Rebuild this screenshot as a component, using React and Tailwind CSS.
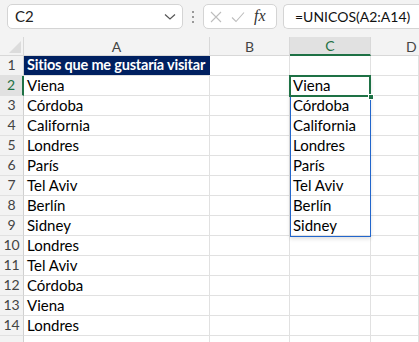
import React from 'react';

const cities = ['Viena', 'Córdoba', 'California', 'Londres', 'París', 'Tel Aviv', 'Berlín', 'Sidney', 'Londres', 'Tel Aviv', 'Córdoba', 'Viena', 'Londres'];
const unique = ['Viena', 'Córdoba', 'California', 'Londres', 'París', 'Tel Aviv', 'Berlín', 'Sidney'];

const cell = 'border-r border-b border-[#e1e1e1] h-[20px] px-[3px] flex items-end pb-[1px] text-[15px] leading-[18px] text-black whitespace-nowrap overflow-visible';

const App = () => {
  const rows = Array.from({ length: 15 }, (_, i) => i + 1);
  return (
    <div className="w-[419px] h-[342px] overflow-hidden bg-white select-none" style={{ fontFamily: 'Lato, "Open Sans", sans-serif' }}>
      {/* formula bar */}
      <div className="h-[37px] bg-[#f3f3f3] flex items-start pt-[4px] pl-[7px] gap-0">
        <div className="w-[176px] h-[25px] bg-white border border-[#d4d4d4] rounded-[5px] flex items-center justify-between pl-[7px] pr-[6px]">
          <span className="text-[15px] text-[#222]">C2</span>
          <svg width="12" height="8" viewBox="0 0 12 8"><path d="M1 1.5 L6 6 L11 1.5" fill="none" stroke="#555" strokeWidth="1.2" /></svg>
        </div>
        <div className="w-[20px] h-[25px] flex flex-col items-center justify-center gap-[3px]">
          <span className="w-[2px] h-[2px] bg-[#999]" />
          <span className="w-[2px] h-[2px] bg-[#999]" />
          <span className="w-[2px] h-[2px] bg-[#999]" />
        </div>
        <div className="w-[74px] h-[25px] bg-white border border-[#d4d4d4] rounded-[5px] flex items-center pl-[6px] gap-[9px]">
          <svg width="12" height="12" viewBox="0 0 12 12"><path d="M1 1 L11 11 M11 1 L1 11" stroke="#bdbdbd" strokeWidth="1.1" /></svg>
          <svg width="14" height="12" viewBox="0 0 14 12"><path d="M1 6.5 L5 10.5 L13 1.5" fill="none" stroke="#bdbdbd" strokeWidth="1.1" /></svg>
          <span className="text-[16px] italic text-[#333] -mt-[2px]" style={{ fontFamily: '"Liberation Serif", serif' }}>fx</span>
        </div>
        <div className="ml-[6px] flex-1 h-[25px] bg-white border border-[#d4d4d4] border-r-0 rounded-l-[5px] flex items-center pl-[11px]">
          <span className="text-[14px] text-[#111]">=UNICOS(A2:A14)</span>
        </div>
      </div>

      {/* sheet */}
      <div className="relative">
        <div className="grid grid-cols-[24px_186px_80px_81px_1fr]">
          {/* column headers */}
          <div className="h-[19px] bg-[#f3f3f3] border-r border-b border-[#d8d8d8] relative">
            <svg className="absolute right-[2px] bottom-[2px]" width="12" height="12" viewBox="0 0 12 12"><path d="M12 0 L12 12 L0 12 Z" fill="#dcdcdc" /></svg>
          </div>
          <div className="h-[19px] bg-[#f3f3f3] border-r border-b border-[#d8d8d8] flex items-center justify-center text-[14px] text-[#444]">A</div>
          <div className="h-[19px] bg-[#f3f3f3] border-r border-b border-[#d8d8d8] flex items-center justify-center text-[14px] text-[#444]">B</div>
          <div className="h-[19px] bg-[#e1e1e1] border-r border-[#d8d8d8] border-b-2 border-b-[#1e7145] flex items-center justify-center text-[14px] text-[#1e7145]">C</div>
          <div className="h-[19px] bg-[#f3f3f3] border-b border-[#d8d8d8] flex items-center pl-[35px] text-[14px] text-[#444]">D</div>

          {rows.map((r) => {
            const sel = r === 2;
            return (
              <React.Fragment key={r}>
                <div className={`h-[20px] flex items-end justify-center pb-[1px] text-[14px] leading-[18px] border-b border-[#e1e1e1] ${sel ? 'bg-[#e1e1e1] text-[#1e7145] border-r-2 border-r-[#1e7145]' : 'bg-[#f3f3f3] text-[#444] border-r border-r-[#d0d0d0]'}`}>
                  {r <= 14 ? r : ''}
                </div>
                {r === 1 ? (
                  <div className="h-[20px] bg-[#002060] border-b border-[#e1e1e1] pl-[3px] flex items-end pb-[1px] text-[14.5px] leading-[18px] tracking-[-0.2px] font-bold text-white whitespace-nowrap overflow-hidden">
                    Sitios que me gustaría visitar
                  </div>
                ) : (
                  <div className={cell}>{cities[r - 2] || ''}</div>
                )}
                <div className={cell} />
                <div className={cell}>{r >= 2 ? unique[r - 2] || '' : ''}</div>
                <div className={cell} />
              </React.Fragment>
            );
          })}
        </div>

        {/* spill range outline */}
        <div className="absolute left-[290px] top-[39px] w-[81px] h-[161px] border border-[#2266cc] shadow-[0_2px_4px_rgba(0,0,0,0.12)] pointer-events-none" />
        {/* active cell */}
        <div className="absolute left-[289px] top-[38px] w-[82px] h-[22px] border-2 border-[#1e7145] pointer-events-none" />
        <div className="absolute left-[368px] top-[57px] w-[6px] h-[6px] bg-[#1e7145] border border-white pointer-events-none" />
      </div>
    </div>
  );
};

export default App;
